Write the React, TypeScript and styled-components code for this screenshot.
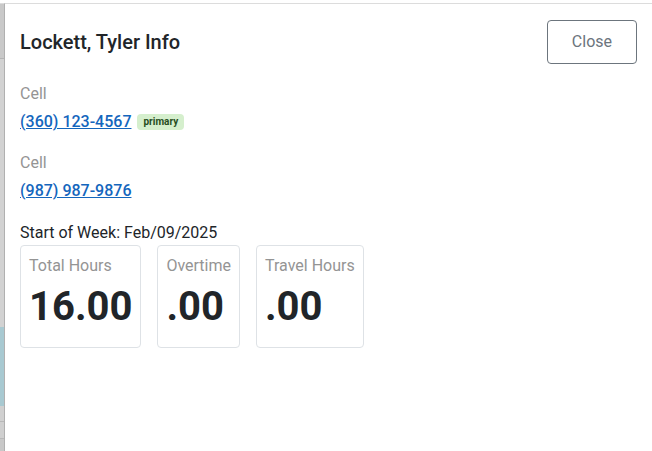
import React from "react";
import styled, { createGlobalStyle } from "styled-components";

const Global = createGlobalStyle`
  html, body { margin: 0; padding: 0; background: #ffffff; }
  body { font-family: Roboto, "Liberation Sans", Arial, sans-serif; color: #212529; font-size: 16px; line-height: 1.5; }
  * { box-sizing: border-box; }
`;

const Screen = styled.div`
  display: flex;
  height: 451px;
  padding-top: 3px;
  overflow: hidden;
`;

const Backdrop = styled.div`
  width: 4px;
  flex: 0 0 4px;
  border-top: 1px solid #dcdcdc;
  background: linear-gradient(
    to bottom,
    #c9c9c9 0px,
    #c9c9c9 54px,
    #b4b4b4 54px,
    #b4b4b4 55px,
    #d2d2d2 55px,
    #d2d2d2 323px,
    #a8c9d1 323px,
    #a8c9d1 402px,
    #d0d0d0 402px,
    #d0d0d0 417px,
    #b8b8b8 417px,
    #b8b8b8 418px,
    #cfcfcf 418px,
    #cfcfcf 434px,
    #b8b8b8 434px,
    #b8b8b8 435px,
    #c8c8c8 435px
  );
`;

const Panel = styled.div`
  flex: 1;
  background: #ffffff;
  border-top: 1px solid #dcdcdc;
  border-left: 1px solid #b0b0b0;
  display: flex;
  flex-direction: column;
`;

const Header = styled.div`
  display: flex;
  align-items: center;
  justify-content: space-between;
  padding: 16px 15px 0 15px;
`;

const Title = styled.h5`
  margin: 0;
  font-size: 20px;
  font-weight: 500;
  line-height: 1.5;
  color: #212529;
`;

const CloseButton = styled.button`
  font-family: inherit;
  font-size: 16px;
  line-height: 24px;
  padding: 9px 24px;
  color: #6c757d;
  background: #ffffff;
  border: 1px solid #6c757d;
  border-radius: 4px;
  cursor: pointer;
`;

const Body = styled.div`
  padding: 18px 15px 0 15px;
  display: flex;
  flex-direction: column;
`;

const Contact = styled.div`
  display: flex;
  flex-direction: column;
  margin-bottom: 17px;
`;

const Label = styled.div`
  color: #949494;
  font-size: 16px;
  line-height: 24px;
  margin-bottom: 4px;
`;

const PhoneRow = styled.div`
  display: flex;
  align-items: center;
  gap: 6px;
  line-height: 24px;
`;

const PhoneLink = styled.a`
  color: #1466bd;
  text-decoration: underline;
  font-size: 16px;
  font-weight: 500;
`;

const Badge = styled.span`
  display: inline-flex;
  align-items: center;
  height: 16px;
  padding: 0 6px;
  border-radius: 4px;
  background: #d5efcd;
  color: #264d1d;
  font-size: 10px;
  font-weight: 700;
  line-height: 1;
`;

const WeekLine = styled.div`
  font-size: 16px;
  line-height: 24px;
  color: #212529;
  margin-top: 1px;
`;

const Cards = styled.div`
  display: flex;
  gap: 16px;
  align-items: flex-start;
`;

const Card = styled.div`
  border: 1px solid #dee2e6;
  border-radius: 4px;
  padding: 8px;
  display: flex;
  flex-direction: column;
`;

const CardLabel = styled.div`
  color: #949494;
  font-size: 16px;
  line-height: 24px;
  margin-bottom: 5px;
  white-space: nowrap;
`;

const CardValue = styled.div`
  font-size: 40px;
  font-weight: 700;
  line-height: 1.2;
  color: #212529;
  margin-bottom: 8px;
`;

const contacts = [
  { label: "Cell", phone: "(360) 123-4567", primary: true },
  { label: "Cell", phone: "(987) 987-9876", primary: false },
];

const stats = [
  { label: "Total Hours", value: "16.00" },
  { label: "Overtime", value: ".00" },
  { label: "Travel Hours", value: ".00" },
];

export default function App() {
  return (
    <>
      <Global />
      <Screen>
        <Backdrop />
        <Panel>
          <Header>
            <Title>Lockett, Tyler Info</Title>
            <CloseButton>Close</CloseButton>
          </Header>
          <Body>
            {contacts.map((c, i) => (
              <Contact key={i}>
                <Label>{c.label}</Label>
                <PhoneRow>
                  <PhoneLink href="#">{c.phone}</PhoneLink>
                  {c.primary && <Badge>primary</Badge>}
                </PhoneRow>
              </Contact>
            ))}
            <WeekLine>Start of Week: Feb/09/2025</WeekLine>
            <Cards>
              {stats.map((s) => (
                <Card key={s.label}>
                  <CardLabel>{s.label}</CardLabel>
                  <CardValue>{s.value}</CardValue>
                </Card>
              ))}
            </Cards>
          </Body>
        </Panel>
      </Screen>
    </>
  );
}
